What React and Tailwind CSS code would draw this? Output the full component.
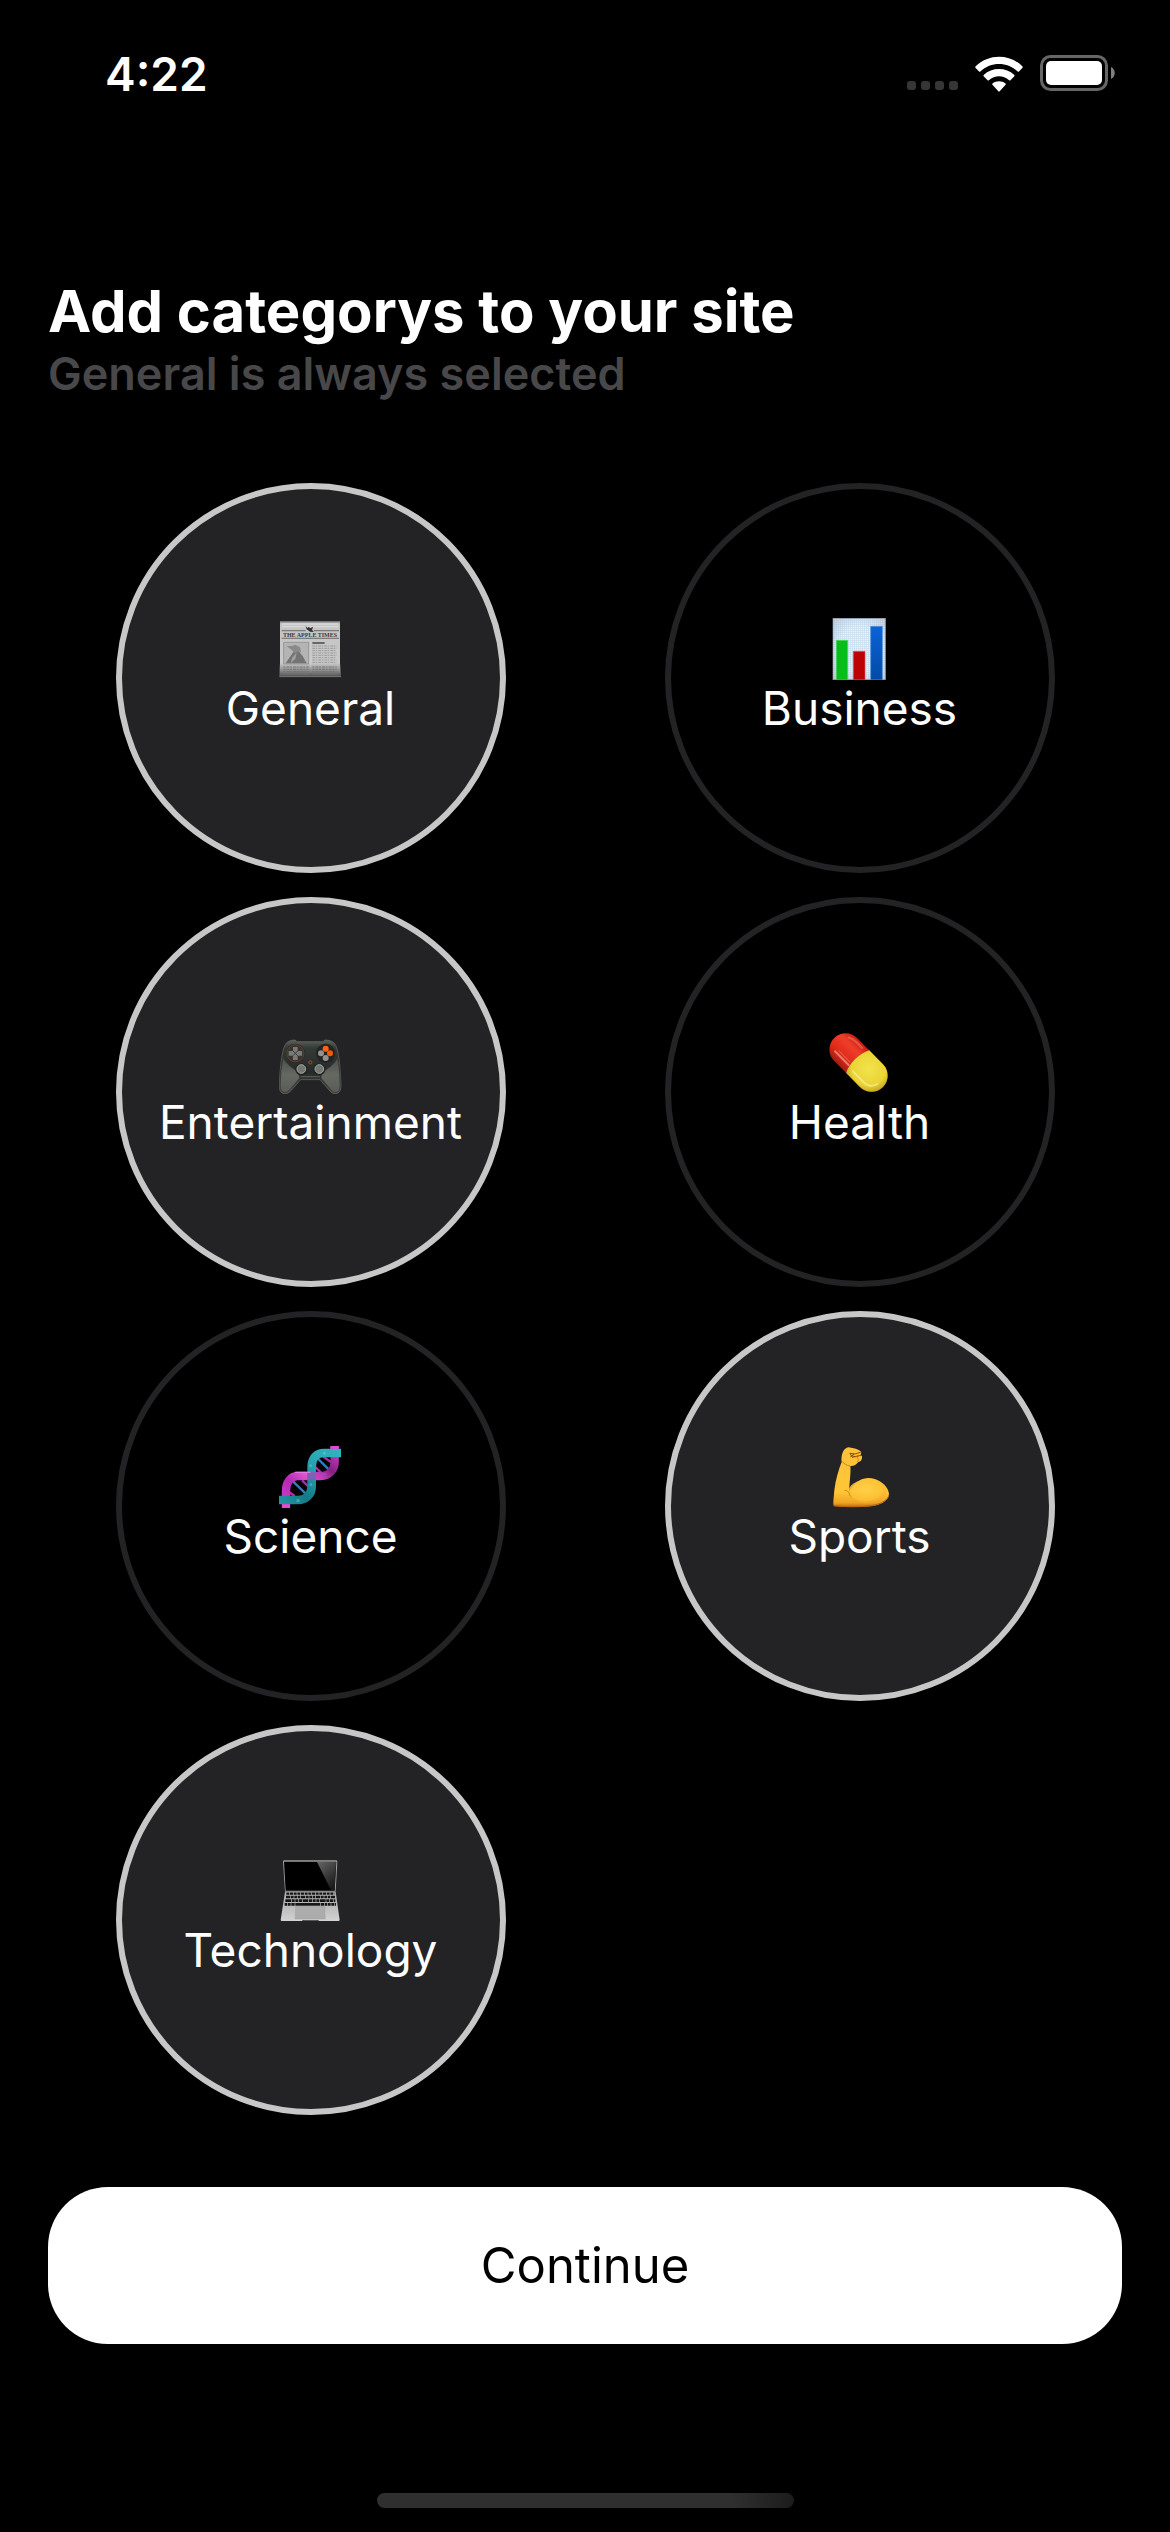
import { useState } from "react";

function Newspaper() {
  return (
    <svg viewBox="177 48 192 192" className="size-16" aria-hidden="true">
      <defs>
        <linearGradient id="paper" x1="0" y1="0" x2="0" y2="1">
          <stop offset="0" stopColor="#8a8a8a" />
          <stop offset="0.05" stopColor="#c4c4c4" />
          <stop offset="0.75" stopColor="#c9c9c9" />
          <stop offset="0.88" stopColor="#8f8f8f" />
          <stop offset="1" stopColor="#4c4c4c" />
        </linearGradient>
      </defs>
      <path d="M180 63H360V190L363 231H178L180 190Z" fill="url(#paper)" />
      <path d="M180 65H360" stroke="#777" strokeWidth="4" />
      <path d="M186 72H354M186 80H354" stroke="#dadada" strokeWidth="4" />
      <path d="M185 92H257M281 92H357M185 115H357" stroke="#7c7c7c" strokeWidth="4" />
      <path d="M256 77L262 84L267 80L270 85L280 80L276 89L281 96L270 95L260 88Z" fill="#333" />
      <text x="270" y="110" textAnchor="middle" fill="#3a3a3a" fontSize="18" fontWeight="700" fontFamily="Liberation Serif, serif">
        THE APPLE TIMES
      </text>
      <path d="M191 127H266V192H191Z" fill="#b4b4b4" stroke="#858585" strokeWidth="2" />
      <path d="M197 190L216 162L222 154H236L248 168L260 190Z" fill="#747474" />
      <path d="M216 151L200 138L216 138L226 134L240 142L243 156L232 154L226 160Z" fill="#8a8a8a" />
      <path d="M216 174L230 158L226 176L212 190Z" fill="#a2a2a2" />
      <path d="M277 129H314" stroke="#555" strokeWidth="5" />
      <path d="M277 138H350M277 145H350M277 152H348M277 159H350M277 166H350M277 173H347M277 180H350M277 187H350" stroke="#999" strokeWidth="3" strokeDasharray="8 2 5 3" />
      <path d="M190 201H266M190 208H266M190 215H266M190 222H266M277 201H350M277 208H350M277 215H350M277 222H350" stroke="#747474" strokeWidth="3" strokeDasharray="6 3 9 2" />
      <path d="M272 122V200" stroke="#d2d2d2" strokeWidth="2" />
      <path d="M178 230H363" stroke="#858585" strokeWidth="2" />
    </svg>
  );
}

function BarChart() {
  return (
    <svg viewBox="234 48 192 192" className="size-16" aria-hidden="true">
      <defs>
        <pattern id="chartGrid" width="6" height="6" patternUnits="userSpaceOnUse">
          <rect width="6" height="6" fill="#edf1f4" />
          <path d="M0 1H6M1 0V6" stroke="#c3d9ec" strokeWidth="2" />
        </pattern>
        <radialGradient id="chartShade" cx="0.5" cy="0.5" r="0.75">
          <stop offset="0.5" stopColor="#778899" stopOpacity="0" />
          <stop offset="1" stopColor="#778899" stopOpacity="0.35" />
        </radialGradient>
        <linearGradient id="blueBar" x1="0" y1="0" x2="0" y2="1">
          <stop offset="0" stopColor="#0a63d8" />
          <stop offset="1" stopColor="#034aa6" />
        </linearGradient>
      </defs>
      <rect x="249" y="55" width="157" height="184" fill="url(#chartGrid)" />
      <rect x="249" y="55" width="157" height="184" fill="url(#chartShade)" stroke="#9aa1a8" strokeWidth="2" />
      <path d="M259 239V121H293V239" fill="#05bf18" stroke="#4dd45a" strokeWidth="2" />
      <path d="M310 239V154H345V239" fill="#bd0204" stroke="#d95555" strokeWidth="2" />
      <path d="M362 239V79H397V239" fill="url(#blueBar)" stroke="#4b8de0" strokeWidth="2" />
    </svg>
  );
}

function Gamepad() {
  return (
    <svg viewBox="417 30 192 192" className="size-16" aria-hidden="true">
      <defs>
        <linearGradient id="padBody" x1="0" y1="0" x2="0" y2="1">
          <stop offset="0" stopColor="#5b605c" />
          <stop offset="0.15" stopColor="#343a38" />
          <stop offset="0.6" stopColor="#262a28" />
          <stop offset="1" stopColor="#4b4e49" />
        </linearGradient>
        <linearGradient id="padGrip" x1="0" y1="0" x2="0" y2="1">
          <stop offset="0" stopColor="#4a4d49" />
          <stop offset="0.5" stopColor="#666862" />
          <stop offset="1" stopColor="#5a5c57" />
        </linearGradient>
      </defs>
      <path d="M436 74C440 66 450 60 466 60L470 65H550L554 60C572 60 582 66 587 76C596 92 601 140 603 196C603 212 598 220 586 221C574 221 570 213 562 204L540 179H482L460 204C452 213 447 221 434 221C421 220 417 210 418 194C420 142 426 90 436 74Z" fill="url(#padBody)" stroke="#696c67" strokeWidth="2" />
      <path d="M430 112C424 134 421 168 421 196C421 211 425 217 435 217C444 217 450 209 457 200L477 177C482 172 477 163 466 150C448 138 434 126 430 112Z" fill="url(#padGrip)" stroke="#353732" strokeWidth="2" />
      <path d="M592 112C598 134 600 168 600 196C600 211 596 217 587 217C578 217 572 209 565 200L545 177C540 172 544 163 556 150C576 138 588 126 592 112Z" fill="url(#padGrip)" stroke="#353732" strokeWidth="2" />
      <path d="M482 170H540" stroke="#5d605a" strokeWidth="3" />
      <circle cx="466" cy="100" r="29" fill="#252826" />
      <circle cx="466" cy="100" r="26" fill="#333632" stroke="#8b4520" strokeWidth="2" />
      <path d="M459 81H473V93H486V107H473V120H459V107H446V93H459Z" fill="#777a75" />
      <path d="M459 93L473 107M473 93L459 107" stroke="#3b3e3b" strokeWidth="3" />
      <circle cx="557" cy="100" r="29" fill="#212422" />
      <circle cx="557" cy="86" r="9" fill="#ff6310" />
      <circle cx="570" cy="100" r="9" fill="#f45805" />
      <circle cx="543" cy="100" r="9" fill="#94918f" />
      <circle cx="557" cy="114" r="9" fill="#94918f" />
      <circle cx="511" cy="127" r="5" fill="#572f19" stroke="#b4581e" strokeWidth="2" />
      <circle cx="484" cy="148" r="18" fill="#1f2220" />
      <circle cx="538" cy="148" r="18" fill="#1f2220" />
      <circle cx="484" cy="147" r="13" fill="#747872" stroke="#a6aaa6" strokeWidth="3" />
      <circle cx="538" cy="147" r="13" fill="#747872" stroke="#a6aaa6" strokeWidth="3" />
    </svg>
  );
}

function Pill() {
  return (
    <svg viewBox="174 30 192 192" className="size-16" aria-hidden="true">
      <defs>
        <linearGradient id="pillRed" x1="0" y1="0" x2="0" y2="1">
          <stop offset="0" stopColor="#c91c10" />
          <stop offset="0.3" stopColor="#ee3f2c" />
          <stop offset="0.7" stopColor="#e02a18" />
          <stop offset="1" stopColor="#9f1d12" />
        </linearGradient>
        <radialGradient id="pillYellow" gradientUnits="userSpaceOnUse" cx="300" cy="118" r="86">
          <stop offset="0" stopColor="#f4e34c" />
          <stop offset="0.6" stopColor="#ead436" />
          <stop offset="1" stopColor="#a88414" />
        </radialGradient>
      </defs>
      <g transform="rotate(45.5 265.5 127.5)">
        <rect x="162" y="79" width="207" height="97" rx="48" fill="url(#pillRed)" />
        <path d="M262 79H321A48 48 0 0 1 321 176H262C248 150 248 105 262 79Z" fill="url(#pillYellow)" />
        <path d="M192 154H250" stroke="#f59a88" strokeWidth="6" strokeLinecap="round" opacity="0.75" />
        <path d="M200 145H246" stroke="#f06a55" strokeWidth="4" strokeLinecap="round" opacity="0.6" />
        <path d="M272 158H316C338 158 348 146 351 132" fill="none" stroke="#f7ec93" strokeWidth="5" strokeLinecap="round" opacity="0.8" />
        <path d="M192 96C202 88 216 88 242 89" fill="none" stroke="#fa7865" strokeWidth="7" strokeLinecap="round" opacity="0.5" />
      </g>
    </svg>
  );
}

function Dna() {
  return (
    <svg viewBox="207 42 192 192" className="size-16" aria-hidden="true">
      <defs>
        <linearGradient id="strandPink" gradientUnits="userSpaceOnUse" x1="216" y1="234" x2="386" y2="48">
          <stop offset="0" stopColor="#d43fd2" />
          <stop offset="0.3" stopColor="#b52ab5" />
          <stop offset="0.5" stopColor="#df5cd3" />
          <stop offset="0.72" stopColor="#841f83" />
          <stop offset="1" stopColor="#dc42cf" />
        </linearGradient>
        <linearGradient id="strandTeal" gradientUnits="userSpaceOnUse" x1="207" y1="223" x2="393" y2="56">
          <stop offset="0" stopColor="#2498a6" />
          <stop offset="0.3" stopColor="#157986" />
          <stop offset="0.52" stopColor="#2297a6" />
          <stop offset="0.7" stopColor="#2aa9b4" />
          <stop offset="1" stopColor="#30b4c0" />
        </linearGradient>
      </defs>
      <path d="M228 180L254 198M304 99L342 137" stroke="#ba2c9f" strokeWidth="7" />
      <path d="M249 154L292 196M320 82L359 121" stroke="#347bc5" strokeWidth="7" />
      <path d="M276 151L304 178M340 80L366 98" stroke="#a42daa" strokeWidth="7" />
      <path d="M228 234V182C228 158 242 138 262 138H332C358 138 374 118 374 96V48" fill="none" stroke="url(#strandPink)" strokeWidth="25" />
      <path d="M207 210H264C286 210 305 194 305 170V110C305 84 320 69 342 69H393" fill="none" stroke="url(#strandTeal)" strokeWidth="26" />
      <path d="M291 126H318L352 130L340 149L304 151L291 150Z" fill="#bb3dc0" opacity="0.6" />
      <path d="M216 223H240V233H216ZM361 49H386V56H361Z" fill="#e14bd7" />
      <path d="M255 127H302" stroke="#ee8be2" strokeWidth="4" opacity="0.7" />
      <g fill="#69ced5" opacity="0.5">
        <circle cx="264" cy="212" r="5" />
        <circle cx="303" cy="164" r="4" />
        <circle cx="343" cy="70" r="5" />
        <circle cx="302" cy="107" r="4" />
      </g>
    </svg>
  );
}

function FlexedArm() {
  return (
    <svg viewBox="174 42 192 192" className="size-16" aria-hidden="true">
      <defs>
        <linearGradient id="armSkin" x1="0" y1="0" x2="0" y2="1">
          <stop offset="0" stopColor="#fbc23a" />
          <stop offset="0.75" stopColor="#ffc636" />
          <stop offset="0.93" stopColor="#f0a324" />
          <stop offset="1" stopColor="#bb6c13" />
        </linearGradient>
        <radialGradient id="armMuscle" cx="0.45" cy="0.4" r="0.65">
          <stop offset="0" stopColor="#ffd149" />
          <stop offset="0.7" stopColor="#fdc135" stopOpacity="0.8" />
          <stop offset="1" stopColor="#e59b22" stopOpacity="0" />
        </radialGradient>
      </defs>
      <path d="M224 58C230 51 237 50 243 53C254 54 266 58 274 66L272 74L276 79C277 90 272 95 264 97C259 105 250 109 241 108C243 126 239 150 237 186C248 164 267 145 294 144C325 144 354 166 357 191C357 212 330 228 290 230C254 231 216 232 192 229C188 226 191 205 193 181C197 148 206 119 215 96C213 80 217 65 224 58Z" fill="url(#armSkin)" />
      <ellipse cx="292" cy="185" rx="57" ry="36" fill="url(#armMuscle)" />
      <path d="M240 108C229 106 222 101 216 94M237 188C231 181 227 181 223 182M237 188C239 195 240 198 244 201" fill="none" stroke="#c98118" strokeWidth="3" />
      <path d="M241 70L255 72L271 67M245 77L256 80L272 76M240 70L247 82L264 78M242 80L251 73" fill="none" stroke="#8c4b12" strokeWidth="3" strokeLinecap="round" />
      <path d="M257 80C264 81 267 86 263 96" fill="none" stroke="#d38b1e" strokeWidth="3" />
      <path d="M192 227C228 231 266 231 294 228C326 225 350 214 356 198" fill="none" stroke="#b8660f" strokeWidth="3" />
    </svg>
  );
}

function Laptop() {
  return (
    <svg viewBox="327 54 192 192" className="size-16" aria-hidden="true">
      <defs>
        <linearGradient id="glare" x1="0" y1="0" x2="0.6" y2="1">
          <stop offset="0" stopColor="#666" />
          <stop offset="1" stopColor="#1b1b1b" />
        </linearGradient>
        <linearGradient id="deck" x1="0" y1="0" x2="0" y2="1">
          <stop offset="0" stopColor="#a4a4a4" />
          <stop offset="1" stopColor="#d3d3d3" />
        </linearGradient>
      </defs>
      <path d="M343 61H498Q502 61 502 65L497 155H345L339 65Q339 61 343 61Z" fill="#9e9e9e" />
      <path d="M342 65H499L494 152H347Z" fill="#000" />
      <path d="M441 66H498L494 151H483Z" fill="url(#glare)" />
      <path d="M345 155H497L509 240Q509 243 505 243H448L443 240H400L395 243H336Q332 243 332 240Z" fill="url(#deck)" />
      <path d="M347 157H495L499 197H342Z" fill="#b6b6b6" />
      <path d="M349 161H493" stroke="#161616" strokeWidth="7" strokeDasharray="9 2" />
      <path d="M348 171H495" stroke="#161616" strokeWidth="7" strokeDasharray="13 2 8 2 8 2 8 2" />
      <path d="M346 182H496" stroke="#161616" strokeWidth="8" strokeDasharray="17 2 9 2 9 2 9 2" />
      <path d="M344 193H498" stroke="#161616" strokeWidth="8" strokeDasharray="8 2 8 2 10 2 74 2 10 2 8 2" />
      <path d="M377 199H464L466 237H375Z" fill="#acacac" stroke="#999" strokeWidth="1" />
      <path d="M398 240H446L442 243H402Z" fill="#555" />
    </svg>
  );
}

const categories = [
  { name: "General", Icon: Newspaper, selected: true },
  { name: "Business", Icon: BarChart, selected: false },
  { name: "Entertainment", Icon: Gamepad, selected: true },
  { name: "Health", Icon: Pill, selected: false },
  { name: "Science", Icon: Dna, selected: false },
  { name: "Sports", Icon: FlexedArm, selected: true },
  { name: "Technology", Icon: Laptop, selected: true },
];

function StatusBar() {
  return (
    <div className="flex h-[150px] items-start justify-between pt-[46px] pr-[54px] pl-[105px]">
      <time className="text-[46px] leading-[56px] font-semibold">4:22</time>
      <div className="flex items-end gap-[17px] pt-[9px]">
        <div className="flex gap-[5px] pb-[2px]">
          <span className="size-[9px] rounded-[3px] bg-[#363636]" />
          <span className="size-[9px] rounded-[3px] bg-[#363636]" />
          <span className="size-[9px] rounded-[3px] bg-[#363636]" />
          <span className="size-[9px] rounded-[3px] bg-[#363636]" />
        </div>
        <svg viewBox="284 74 146 110" className="h-9 w-12" fill="#fff" role="img" aria-label="Wi-Fi">
          <path d="M285 106C325 66 389 66 429 106Q430 108 429 110L418 121Q416 123 414 121C382 91 332 91 300 121Q298 123 296 121L285 110Q284 108 285 106Z" />
          <path d="M310 132C336 108 378 108 404 132Q405 134 404 136L392 148Q390 150 388 148C370 132 344 132 326 148Q324 150 322 148L310 136Q309 134 310 132Z" />
          <path d="M337 158C348 149 366 149 377 158Q379 160 377 162L359 182Q357 184 355 182L337 162Q335 160 337 158Z" />
        </svg>
        <svg viewBox="0 0 76 37" className="h-[37px] w-[76px]" role="img" aria-label="Battery full">
          <rect x="1.5" y="1.5" width="65" height="33" rx="9" fill="none" stroke="#666" strokeWidth="3" />
          <rect x="6" y="6" width="56" height="24" rx="5" fill="#fff" />
          <path d="M71 12C76 14 76 22 71 24Z" fill="#808080" />
        </svg>
      </div>
    </div>
  );
}

export default function App() {
  const [selected, setSelected] = useState(
    categories.filter((c) => c.selected).map((c) => c.name)
  );

  const toggle = (name) => {
    if (name === "General") return;
    setSelected((current) =>
      current.includes(name) ? current.filter((n) => n !== name) : [...current, name]
    );
  };

  return (
    <div className="flex min-h-screen flex-col bg-black font-['Inter',sans-serif] text-white">
      <StatusBar />
      <main className="flex flex-col px-12 pt-[125px]">
        <h1 className="text-[58px] leading-[72px] font-bold">Add categorys to your site</h1>
        <p className="text-[45px] leading-[54px] font-semibold text-[#48484a]">
          General is always selected
        </p>
        <div className="mt-[82px] grid grid-cols-2 gap-6">
          {categories.map(({ name, Icon }) => {
            const on = selected.includes(name);
            return (
              <button
                key={name}
                type="button"
                aria-pressed={on}
                onClick={() => toggle(name)}
                className={`flex size-[390px] flex-col items-center justify-center justify-self-center rounded-full border-6 pb-1 text-[46px] leading-[56px] ${
                  on ? "border-[#c7c7c7] bg-[#232325]" : "border-[#232325] bg-black"
                }`}
              >
                <Icon />
                <span>{name}</span>
              </button>
            );
          })}
        </div>
        <button
          type="button"
          className="mt-[72px] rounded-[60px] bg-white py-12 text-[49px] leading-[61px] text-black"
        >
          Continue
        </button>
      </main>
      <div className="mt-auto flex justify-center pb-6">
        <div className="h-[15px] w-[417px] rounded-full bg-linear-to-r from-[#2f2f2f] from-85% to-[#1c1c1c]" />
      </div>
    </div>
  );
}
